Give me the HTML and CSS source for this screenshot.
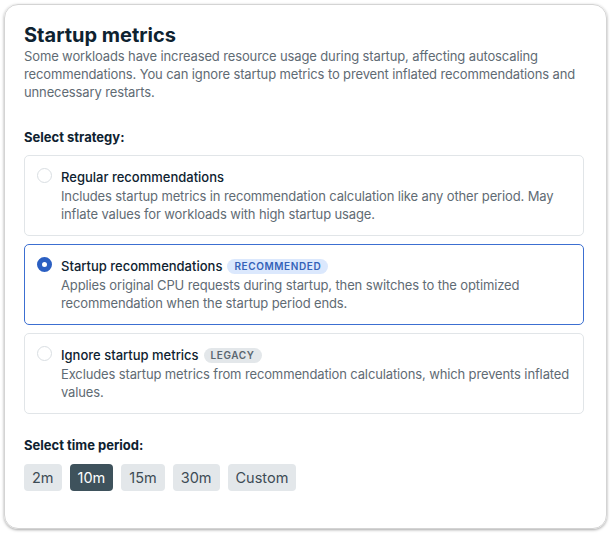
FILE: index.html
```html
<!DOCTYPE html>
<html lang="en">
<head>
  <meta charset="UTF-8" />
  <meta name="viewport" content="width=device-width, initial-scale=1.0"/>
  <title>Startup metrics</title>
  <link rel="stylesheet" href="styles.css">
</head>
<body>
  <div class="panel">
    <h2>Startup metrics</h2>
    <p class="intro">Some workloads have increased resource usage during startup, affecting autoscaling recommendations. You can ignore startup metrics to prevent inflated recommendations and unnecessary restarts.</p>

    <div class="label">Select strategy:</div>

    <div class="options">
      <div class="option">
        <span class="radio"></span>
        <div class="option-body">
          <div class="option-title">Regular recommendations</div>
          <div class="option-desc">Includes startup metrics in recommendation calculation like any other period. May inflate values for workloads with high startup usage.</div>
        </div>
      </div>
      <div class="option selected">
        <span class="radio"></span>
        <div class="option-body">
          <div class="option-title">Startup recommendations <span class="badge blue">RECOMMENDED</span></div>
          <div class="option-desc">Applies original CPU requests during startup, then switches to the optimized recommendation when the startup period ends.</div>
        </div>
      </div>
      <div class="option">
        <span class="radio"></span>
        <div class="option-body">
          <div class="option-title">Ignore startup metrics <span class="badge grey">LEGACY</span></div>
          <div class="option-desc">Excludes startup metrics from recommendation calculations, which prevents inflated values.</div>
        </div>
      </div>
    </div>

    <div class="label period">Select time period:</div>
    <div class="periods">
      <span class="chip">2m</span>
      <span class="chip active">10m</span>
      <span class="chip">15m</span>
      <span class="chip">30m</span>
      <span class="chip">Custom</span>
    </div>
  </div>
</body>
</html>
```

FILE: styles.css
```css
body {
  margin: 0;
  padding: 0;
  background-color: #fff;
  font-family: 'Inter', sans-serif;
  color: #0e2230;
}

.panel {
  margin: 4px;
  height: 525px;
  box-sizing: border-box;
  padding: 18px 22px 0 19px;
  border: 1px solid #d4d4d4;
  border-radius: 14px;
  box-shadow: 0 1px 3px rgba(0, 0, 0, 0.35);
}

h2 {
  margin: 0;
  font-size: 20px;
  line-height: 24px;
  font-weight: 700;
  color: #0e2230;
}

.intro {
  margin: 0;
  font-size: 13px;
  line-height: 18px;
  letter-spacing: -0.13px;
  color: #5f6b74;
}

.label {
  margin-top: 27px;
  font-size: 13px;
  line-height: 18px;
  font-weight: 700;
  color: #0e2230;
}

.options {
  display: flex;
  flex-direction: column;
  gap: 8px;
  margin-top: 9px;
}

.option {
  display: flex;
  gap: 9px;
  padding: 11px 8px 12px 12px;
  border: 1px solid #e1e5e8;
  border-radius: 5px;
}

.option.selected {
  border-color: #3c6fd1;
}

.radio {
  flex: none;
  width: 15px;
  height: 15px;
  margin-top: 1px;
  box-sizing: border-box;
  border: 1px solid #d9dee2;
  border-radius: 50%;
  background-color: #fff;
}

.selected .radio {
  border: 5px solid #2b5fc2;
}

.option-title {
  display: flex;
  align-items: center;
  gap: 5px;
  min-height: 20px;
  font-size: 13px;
  font-weight: 500;
  color: #0e2230;
}

.option-desc {
  font-size: 13px;
  line-height: 18px;
  letter-spacing: -0.13px;
  color: #5f6b74;
}

.badge {
  padding: 0 7px;
  border-radius: 8px;
  font-size: 10px;
  line-height: 15px;
  font-weight: 600;
  letter-spacing: 0.6px;
}

.badge.blue {
  background-color: #dbe8fd;
  color: #3462b8;
}

.badge.grey {
  background-color: #e3e7ea;
  color: #5a6670;
}

.label.period {
  margin-top: 22px;
}

.periods {
  display: flex;
  gap: 8px;
  margin-top: 10px;
}

.chip {
  padding: 0 8px;
  height: 27px;
  line-height: 27px;
  border-radius: 4px;
  background-color: #e3e7ea;
  color: #3d4b55;
  font-size: 14.5px;
}

.chip.active {
  background-color: #3e525c;
  color: #fff;
}
```
